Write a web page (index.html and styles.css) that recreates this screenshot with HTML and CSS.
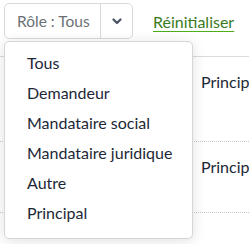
FILE: index.html
```html
<!DOCTYPE html>
<html lang="fr">
<head>
  <meta charset="UTF-8">
  <meta name="viewport" content="width=device-width, initial-scale=1.0">
  <title>Rôles</title>
  <link rel="stylesheet" href="styles.css">
</head>
<body>
  <div class="page">
    <div class="toolbar">
      <div class="btn-group">
        <button type="button" class="btn-filter">Rôle : Tous</button>
        <button type="button" class="btn-toggle" aria-label="Ouvrir">
          <svg width="10" height="7" viewBox="0 0 10 7"><path d="M1.5 1.5 L5 5 L8.5 1.5" fill="none" stroke="#4a5466" stroke-width="2.2" stroke-linecap="round" stroke-linejoin="round"/></svg>
        </button>
      </div>
      <a href="#" class="reset-link">Réinitialiser</a>
    </div>

    <div class="table">
      <div class="row row-first">
        <div class="cell-hidden"></div>
        <div class="cell">Principal</div>
      </div>
      <div class="row row-second">
        <div class="cell-hidden"></div>
        <div class="cell">Principal</div>
      </div>
    </div>

    <ul class="dropdown">
      <li>Tous</li>
      <li>Demandeur</li>
      <li>Mandataire social</li>
      <li>Mandataire juridique</li>
      <li>Autre</li>
      <li>Principal</li>
    </ul>
  </div>
</body>
</html>
```

FILE: styles.css
```css
body {
  margin: 0;
  font-family: "Lato", "Liberation Sans", sans-serif;
  background: #fff;
  color: #1c2836;
  overflow: hidden;
}
.page {
  position: relative;
  padding: 3px 0 0 4px;
  width: 245px;
  height: 241px;
  overflow: hidden;
}
.toolbar {
  display: flex;
  align-items: center;
  gap: 20px;
}
.btn-group {
  display: flex;
  border: 1px solid #d9d9d9;
  border-radius: 5px;
  box-sizing: border-box;
  height: 36px;
}
.btn-group button {
  font-family: inherit;
  background: #fff;
  border: none;
  cursor: pointer;
}
.btn-filter {
  width: 96px;
  padding: 0 0 0 12px;
  text-align: left;
  font-size: 15.5px;
  color: #6b6f75;
  border-radius: 5px 0 0 5px;
  border-right: 1px solid #d9d9d9 !important;
}
.btn-toggle {
  width: 31px;
  display: flex;
  align-items: center;
  justify-content: center;
  padding: 0;
  border-radius: 0 5px 5px 0;
}
.reset-link {
  font-size: 16px;
  color: #3a7a1e;
  text-decoration: underline;
  text-decoration-color: #4caf1a;
  text-underline-offset: 3px;
}
.table {
  margin-top: 17px;
  margin-left: -4px;
  border-top: 1px solid #dcdcdc;
  font-size: 16px;
}
.row {
  display: flex;
  border-bottom: 1px dotted #c8c8c8;
  box-sizing: border-box;
  padding-top: 15px;
}
.row-first {
  height: 85px;
}
.row-second {
  height: 71px;
}
.cell-hidden {
  width: 201px;
  flex-shrink: 0;
}
.cell {
  line-height: 20px;
  white-space: nowrap;
}
.dropdown {
  position: absolute;
  top: 41px;
  left: 4px;
  width: 189px;
  margin: 0;
  padding: 6px 0 10px;
  list-style: none;
  background: #fff;
  border: 1px solid #d6d6d6;
  border-radius: 5px;
  box-sizing: border-box;
  box-shadow: 0 2px 14px rgba(0, 0, 0, 0.12);
}
.dropdown li {
  height: 30px;
  line-height: 30px;
  padding-left: 22px;
  font-size: 16px;
}
```
